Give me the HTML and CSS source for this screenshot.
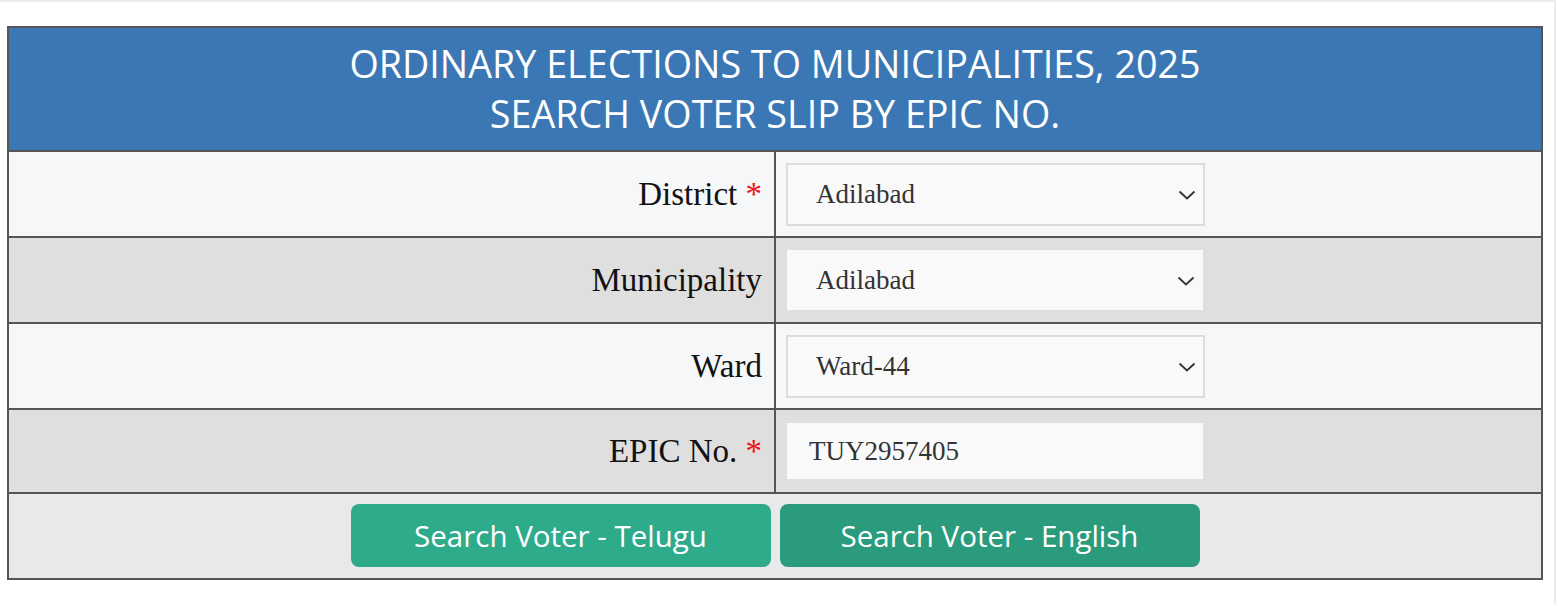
FILE: index.html
```html
<!DOCTYPE html>
<html lang="en">
<head>
<meta charset="utf-8">
<title>Search Voter Slip</title>
<link rel="stylesheet" href="styles.css">
</head>
<body>
<div class="page">
  <table class="form-table">
    <tr>
      <th colspan="2" class="head">ORDINARY ELECTIONS TO MUNICIPALITIES, 2025<br>SEARCH VOTER SLIP BY EPIC NO.</th>
    </tr>
    <tr class="row-light">
      <td class="label">District <span class="req">*</span></td>
      <td class="field">
        <div class="select-wrap bordered">
          <select class="sel"><option>Adilabad</option></select>
          <svg class="chev" width="18" height="10" viewBox="0 0 18 10"><path d="M1.5 1.5 L9 8.5 L16.5 1.5" fill="none" stroke="#333" stroke-width="1.8"/></svg>
        </div>
      </td>
    </tr>
    <tr class="row-dark">
      <td class="label">Municipality</td>
      <td class="field">
        <div class="select-wrap plain">
          <select class="sel"><option>Adilabad</option></select>
          <svg class="chev" width="18" height="10" viewBox="0 0 18 10"><path d="M1.5 1.5 L9 8.5 L16.5 1.5" fill="none" stroke="#333" stroke-width="1.8"/></svg>
        </div>
      </td>
    </tr>
    <tr class="row-light">
      <td class="label">Ward</td>
      <td class="field">
        <div class="select-wrap bordered">
          <select class="sel"><option>Ward-44</option></select>
          <svg class="chev" width="18" height="10" viewBox="0 0 18 10"><path d="M1.5 1.5 L9 8.5 L16.5 1.5" fill="none" stroke="#333" stroke-width="1.8"/></svg>
        </div>
      </td>
    </tr>
    <tr class="row-dark row-epic">
      <td class="label">EPIC No. <span class="req">*</span></td>
      <td class="field">
        <input class="txt" type="text" value="TUY2957405">
      </td>
    </tr>
    <tr class="row-btn">
      <td colspan="2" class="btn-cell">
        <div class="btns">
          <button class="btn btn-telugu">Search Voter - Telugu</button>
          <button class="btn btn-english">Search Voter - English</button>
        </div>
      </td>
    </tr>
  </table>
</div>
</body>
</html>
```
FILE: styles.css
```css
html, body {
  margin: 0;
  padding: 0;
  background: #ffffff;
}
.page {
  border-top: 2px solid #ececec;
  border-right: 2px solid #ececec;
  height: 604px;
  width: 1556px;
  box-sizing: border-box;
  padding: 24px 0 0 7px;
}
.form-table {
  border-collapse: collapse;
  width: 1536px;
  table-layout: fixed;
}
.form-table th,
.form-table td {
  border: 2px solid #555555;
  padding: 0;
}
.head {
  background: #3b77b4;
  color: #ffffff;
  font-family: "Open Sans", sans-serif;
  font-weight: 400;
  font-size: 37.7px;
  line-height: 50px;
  height: 124px;
  text-align: center;
  box-sizing: border-box;
}
.row-light td { background: #f6f7f9; }
.row-dark td { background: #dfdfdf; }
.row-btn td { background: #e8e9eb; }
.form-table tr.row-light td,
.form-table tr.row-dark td { height: 84px; }
.form-table tr.row-epic td { height: 82px; }
.label {
  width: 766px;
  text-align: right;
  padding-right: 12px !important;
  font-family: "Liberation Serif", "Times New Roman", serif;
  font-size: 33px;
  color: #111111;
  box-sizing: border-box;
}
.req { color: #ee1111; }
.field {
  padding-left: 10px !important;
  text-align: left;
}
.select-wrap {
  position: relative;
  display: block;
}
.select-wrap.bordered { width: 419px; height: 63px; }
.select-wrap.plain { width: 416px; height: 60px; margin-left: 1px; }
.sel {
  appearance: none;
  -webkit-appearance: none;
  width: 100%;
  height: 100%;
  box-sizing: border-box;
  background: #f9f9f9;
  font-family: "Liberation Serif", "Times New Roman", serif;
  font-size: 27px;
  color: #333333;
  padding: 0 0 0 28px;
  outline: none;
  margin: 0;
}
.bordered .sel { border: 2px solid #dcdcdc; }
.plain .sel { border: none; background: #f9f9f9; padding-left: 29px; }
.chev {
  position: absolute;
  right: 9px;
  top: 50%;
  margin-top: -4px;
  pointer-events: none;
}
.plain .chev { right: 8px; }
.txt {
  display: block;
  width: 416px;
  height: 56px;
  margin-left: 1px;
  box-sizing: border-box;
  border: none;
  background: #f9f9f9;
  font-family: "Liberation Serif", "Times New Roman", serif;
  font-size: 27px;
  color: #333333;
  padding: 0 0 0 22px;
  outline: none;
}
.btn-cell {
  height: 84px;
  vertical-align: top;
}
.btns {
  display: flex;
  justify-content: center;
  gap: 9px;
  padding-top: 10px;
}
.btn {
  width: 420px;
  height: 63px;
  border: none;
  border-radius: 8px;
  color: #ffffff;
  font-family: "Open Sans", sans-serif;
  font-size: 29.5px;
  padding: 0;
  cursor: pointer;
}
.btn-telugu { background: #2eab8b; }
.btn-english { background: #2a9b7c; }
```
